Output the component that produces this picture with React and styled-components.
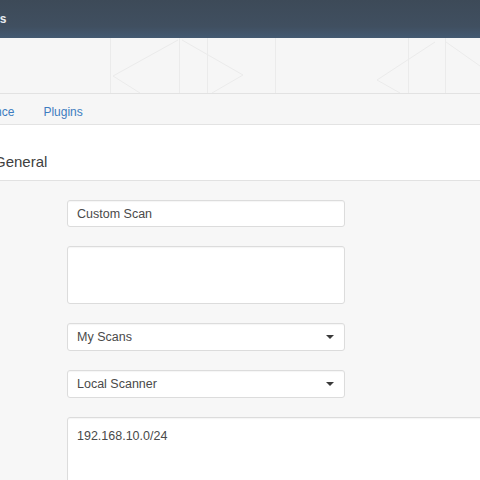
import React from 'react';
import styled, { createGlobalStyle } from 'styled-components';

const GlobalStyle = createGlobalStyle`
  html, body {
    margin: 0;
    padding: 0;
    background: #f7f7f7;
    font-family: "Liberation Sans", Arial, sans-serif;
    overflow: hidden;
  }
`;

const Page = styled.div`
  width: 480px;
  height: 480px;
  overflow: hidden;
  display: flex;
  flex-direction: column;
  background: #f7f7f7;
`;

const TopBar = styled.div`
  height: 38px;
  flex-shrink: 0;
  background: linear-gradient(to bottom, #3d4a58 0%, #404f60 70%, #445a72 100%);
  display: flex;
  align-items: center;
`;

const NavLink = styled.span`
  margin-left: -29px;
  color: #e9edf2;
  font-size: 12px;
  font-weight: 700;
`;

const Banner = styled.div`
  height: 55px;
  flex-shrink: 0;
  background: #f6f6f6;
  border-bottom: 1px solid #e2e2e2;
  svg {
    display: block;
  }
`;

const Tabs = styled.div`
  height: 31px;
  flex-shrink: 0;
  box-sizing: border-box;
  background: #f6f6f6;
  border-bottom: 1px solid #e3e3e3;
  display: flex;
  align-items: flex-end;
  gap: 29px;
  padding-bottom: 5px;
  margin-left: -49px;
`;

const Tab = styled.span`
  font-size: 12px;
  color: #3d7cc0;
`;

const SectionHeader = styled.div`
  height: 56px;
  flex-shrink: 0;
  box-sizing: border-box;
  background: #ffffff;
  border-bottom: 1px solid #e2e2e2;
  display: flex;
  align-items: flex-start;
  padding-top: 28px;
`;

const SectionTitle = styled.h2`
  margin: 0 0 0 -6px;
  font-size: 15px;
  line-height: 17px;
  font-weight: 400;
  color: #404040;
`;

const Form = styled.div`
  flex: 1;
  display: flex;
  flex-direction: column;
  gap: 19px;
  padding: 19px 0 0 67px;
`;

const Field = styled.div`
  position: relative;
  width: ${p => p.$wide ? '440px' : '278px'};
  height: ${p => p.$h}px;
  box-sizing: border-box;
  background: #ffffff;
  border: 1px solid #dcdcdc;
  border-radius: 3px;
  box-shadow: inset 0 1px 1px rgba(0, 0, 0, 0.04);
  padding: ${p => p.$multi ? '11px 9px' : '0 9px'};
  display: flex;
  align-items: ${p => p.$multi ? 'flex-start' : 'center'};
  font-size: 12.5px;
  color: #4a4a4a;
  flex-shrink: 0;
`;

const Caret = styled.span`
  position: absolute;
  right: 10px;
  top: 50%;
  margin-top: -2px;
  width: 0;
  height: 0;
  border-left: 4px solid transparent;
  border-right: 4px solid transparent;
  border-top: 4px solid #3a3a3a;
`;

const Pattern = () => (
  <svg width="480" height="55" viewBox="0 0 480 55">
    <g stroke="#ebebeb" strokeWidth="1" fill="none">
      <line x1="110.5" y1="0" x2="110.5" y2="55" />
      <line x1="179.5" y1="0" x2="179.5" y2="55" />
      <line x1="207.5" y1="0" x2="207.5" y2="55" />
      <line x1="275.5" y1="0" x2="275.5" y2="55" />
      <polyline points="140,55 113,38 178,2" />
      <polyline points="182,2 243,37 212,55" />
      <line x1="408.5" y1="0" x2="408.5" y2="55" />
      <line x1="445.5" y1="0" x2="445.5" y2="55" />
      <polyline points="400,55 377,42 435,4" />
      <polyline points="446,4 480,28" />
    </g>
  </svg>
);

export default function App() {
  return (
    <Page>
      <GlobalStyle />
      <TopBar>
        <NavLink>Scans</NavLink>
      </TopBar>
      <Banner>
        <Pattern />
      </Banner>
      <Tabs>
        <Tab>Compliance</Tab>
        <Tab>Plugins</Tab>
      </Tabs>
      <SectionHeader>
        <SectionTitle>General</SectionTitle>
      </SectionHeader>
      <Form>
        <Field $h={27}>Custom Scan</Field>
        <Field $h={58} $multi />
        <Field $h={28}>
          My Scans
          <Caret />
        </Field>
        <Field $h={28}>
          Local Scanner
          <Caret />
        </Field>
        <Field $h={100} $multi $wide>192.168.10.0/24</Field>
      </Form>
    </Page>
  );
}
